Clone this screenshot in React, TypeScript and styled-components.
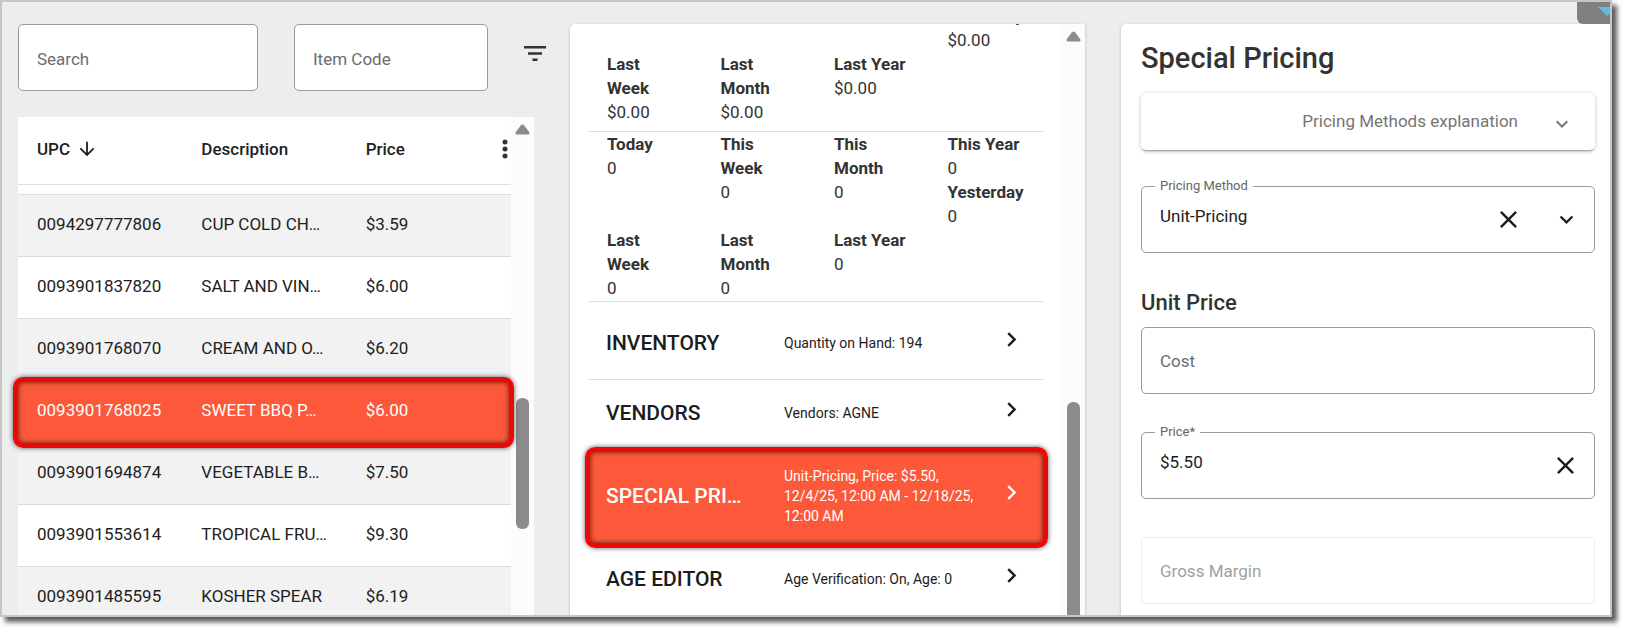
import React from "react";
import styled, { createGlobalStyle, css } from "styled-components";
import {
  MdArrowDownward,
  MdChevronRight,
  MdClose,
  MdExpandMore,
} from "react-icons/md";

const GlobalStyle = createGlobalStyle`
  *, *::before, *::after { box-sizing: border-box; }
  body {
    min-height: 100vh;
    margin: 0;
    background: #fff;
    color: #212121;
    font-family: Roboto, "Liberation Sans", sans-serif;
    font-size: 17px;
    line-height: 24px;
  }
  button, input, select { font: inherit; color: inherit; }
  h1, h2, h3, p, dl, dd { margin: 0; }
`;

const Frame = styled.main`
  position: relative;
  height: calc(100vh - 15px);
  margin-right: 15px;
  border: 2px solid #c8c5c5;
  background: #ebeeed;
  box-shadow: 5px 5px 5px #5a5a5a;
`;

const Columns = styled.div`
  display: grid;
  grid-template-columns: minmax(0, 552fr) minmax(0, 515fr) minmax(0, 525fr);
  grid-template-rows: minmax(0, 1fr);
  height: 100%;
  padding: 22px 0 0 16px;
  overflow: hidden;
`;

const CornerTab = styled.div`
  position: absolute;
  top: 0;
  right: 0;
  width: 33px;
  height: 22px;
  padding: 5px 0 0 21px;
  overflow: hidden;
  border-bottom-left-radius: 6px;
  background: #808080;
  svg { display: block; }
`;

const highlight = css`
  content: "";
  position: absolute;
  z-index: 1;
  border: 5px solid #ea0808;
  border-radius: 10px;
  box-shadow: 0 0 5px rgba(0, 0, 0, 0.65), inset 0 0 5px rgba(0, 0, 0, 0.65);
  pointer-events: none;
`;

const iconButton = css`
  display: flex;
  align-items: center;
  justify-content: center;
  flex: none;
  padding: 0;
  border: 0;
  background: none;
  cursor: pointer;
`;

const FilterButton = styled.button`
  ${iconButton}
  margin-bottom: 8px;
`;

/* Left column: item list */

const ItemsColumn = styled.section`
  display: flex;
  flex-direction: column;
  gap: 26px;
  min-height: 0;
  padding-right: 20px;
`;

const SearchBar = styled.form`
  display: grid;
  grid-template-columns: minmax(0, 240fr) minmax(0, 194fr) 22px;
  gap: 36px;
  align-items: center;
  padding-right: 4px;
`;

const SearchInput = styled.input`
  width: 100%;
  height: 67px;
  padding: 2px 18px 0;
  border: 1px solid #9a9a9a;
  border-radius: 5px;
  background: #fff;
  &::placeholder { color: #6c6c6c; opacity: 1; }
`;

const ItemsPanel = styled.div`
  display: flex;
  flex: 1;
  min-height: 0;
  margin-right: 16px;
  background: #fff;
`;

const TableArea = styled.div`
  flex: 1;
  min-width: 0;
`;

const ItemsTable = styled.table`
  width: 100%;
  table-layout: fixed;
  border-collapse: separate;
  border-spacing: 0;
`;

const HeadCell = styled.th`
  height: 68px;
  padding: 0 3px 4px 19px;
  border-bottom: 1px solid #dedede;
  text-align: left;
  font-weight: 500;
`;

const HeadContent = styled.div`
  display: flex;
  align-items: center;
  gap: 6px;
`;

const MenuButton = styled.button`
  ${iconButton}
  margin-left: auto;
`;

const PreviousRow = styled.tr`
  td {
    height: 10px;
    padding: 0;
    border-bottom: 1px solid #dedede;
  }
`;

const ItemRow = styled.tr<{ $selected?: boolean }>`
  position: relative;
  background: #fff;
  td {
    height: 62px;
    padding: 0 8px 3px 19px;
    border-bottom: 1px solid #dadada;
    white-space: nowrap;
  }
  &:nth-child(even) { background: #f2f2f2; }
  ${(p) =>
    p.$selected &&
    css`
      && { background: #fc5839; }
      color: #fff;
      td { border-color: #fc5839; }
      td:first-child::after {
        ${highlight}
        inset: -4px -3px -5px -5px;
      }
    `}
`;

const ScrollTrack = styled.div`
  display: flex;
  flex-direction: column;
  align-items: center;
  flex: none;
  width: 23px;
  padding-top: 7px;
  background: #fcfcfc;
`;

const ScrollThumb = styled.div<{ $top: number; $height?: number }>`
  width: 13px;
  flex: ${(p) => (p.$height ? `0 0 ${p.$height}px` : "1")};
  margin-top: ${(p) => p.$top}px;
  border-radius: ${(p) => (p.$height ? "6px" : "6px 6px 0 0")};
  background: #8b8b8b;
`;

/* Middle column: item details */

const DetailsPanel = styled.section`
  display: flex;
  min-height: 0;
  overflow: hidden;
  border-radius: 5px 0 0 0;
  background: #fff;
  box-shadow: 0 1px 3px rgba(0, 0, 0, 0.25);
`;

const DetailsContent = styled.div`
  flex: 1;
  min-width: 0;
  margin-top: -20px;
  padding: 0 19px;
`;

const StatGrid = styled.div<{ $padBottom: number }>`
  display: grid;
  grid-template-columns: repeat(4, 1fr);
  padding-bottom: ${(p) => p.$padBottom}px;
  border-bottom: 1px solid #dcdcdc;
  color: #333;
`;

const StatCell = styled.dl<{ $column?: number }>`
  grid-column: ${(p) => p.$column ?? "auto"};
  padding: 0 18px;
  dt { font-weight: 700; }
`;

const SectionRow = styled.a<{ $tall?: boolean; $selected?: boolean }>`
  position: relative;
  display: grid;
  grid-template-columns: 178px 1fr 29px;
  align-items: center;
  padding: ${(p) => (p.$tall ? "28px 17px 23px" : "20px 17px")};
  border-bottom: ${(p) => (p.$tall ? "1px solid #dcdcdc" : "0")};
  color: #1c1c1c;
  text-decoration: none;
  svg { margin: -8px 0 0; }
  ${(p) =>
    p.$selected &&
    css`
      background: linear-gradient(#fc5839, #fc5839) 0 4px no-repeat;
      color: #fff;
      &::after {
        ${highlight}
        inset: 1px -5px -2px -4px;
      }
    `}
`;

const SectionTitle = styled.h3`
  font-size: 21px;
  line-height: 26px;
  font-weight: 500;
`;

const SectionSummary = styled.p`
  padding-right: 12px;
  font-size: 14px;
  line-height: 20px;
`;

/* Right column: special pricing form */

const PricingPanel = styled.section`
  min-height: 0;
  margin-left: 36px;
  padding: 16px 15px 0 20px;
  border-radius: 5px 0 0 0;
  background: #fff;
  box-shadow: 0 1px 3px rgba(0, 0, 0, 0.25);
`;

const PageTitle = styled.h1`
  font-size: 29px;
  line-height: 36px;
  font-weight: 500;
  color: #333;
`;

const Explanation = styled.button`
  display: flex;
  align-items: center;
  justify-content: flex-end;
  gap: 32px;
  width: 100%;
  height: 57px;
  margin: 17px 0 36px;
  padding: 0 21px 2px 0;
  border: 0;
  border-radius: 5px;
  background: #fff;
  color: #757575;
  box-shadow: 0 3px 2px -2px rgba(0, 0, 0, 0.3), 0 1px 4px rgba(0, 0, 0, 0.25);
  cursor: pointer;
  svg { margin-top: 7px; }
`;

const GroupTitle = styled.h2`
  margin: 35px 0 9px;
  font-size: 22px;
  line-height: 30px;
  font-weight: 500;
  color: #333;
`;

const FieldStack = styled.div`
  display: flex;
  flex-direction: column;
  gap: 38px;
`;

const Field = styled.div<{ $disabled?: boolean }>`
  position: relative;
  display: flex;
  align-items: center;
  height: 67px;
  padding-right: 14px;
  border: 1px solid ${(p) => (p.$disabled ? "#ececec" : "#9a9a9a")};
  border-radius: 5px;
  color: #1c1c1c;
`;

const FloatingLabel = styled.label`
  position: absolute;
  top: -10px;
  left: 13px;
  padding: 0 5px;
  background: #fff;
  font-size: 13px;
  line-height: 18px;
  color: #666;
`;

const fieldControl = css`
  flex: 1;
  min-width: 0;
  height: 100%;
  border: 0;
  outline: 0;
  background: transparent;
`;

const TextInput = styled.input<{ $filled?: boolean }>`
  ${fieldControl}
  padding: ${(p) => (p.$filled ? "0 0 7px 18px" : "1px 0 0 18px")};
  &::placeholder { color: #6c6c6c; opacity: 1; }
  &:disabled::placeholder { color: #a0a0a0; }
`;

const SelectInput = styled.select`
  ${fieldControl}
  appearance: none;
  padding: 0 0 7px 18px;
`;

const ClearButton = styled.button<{ $gap?: number }>`
  ${iconButton}
  margin-right: ${(p) => p.$gap ?? 0}px;
`;

const items = [
  ["0094297777806", "CUP COLD CH…", "$3.59"],
  ["0093901837820", "SALT AND VIN…", "$6.00"],
  ["0093901768070", "CREAM AND O…", "$6.20"],
  ["0093901768025", "SWEET BBQ P…", "$6.00"],
  ["0093901694874", "VEGETABLE B…", "$7.50"],
  ["0093901553614", "TROPICAL FRU…", "$9.30"],
  ["0093901485595", "KOSHER SPEAR", "$6.19"],
];

const selectedUpc = "0093901768025";

type Stat = [label: string, value: string];

const Stats = ({ entries, column }: { entries: Stat[]; column?: number }) => (
  <StatCell $column={column}>
    {entries.map(([label, value]) => (
      <React.Fragment key={label}>
        <dt>{label}</dt>
        <dd>{value}</dd>
      </React.Fragment>
    ))}
  </StatCell>
);

const ScrollBar = ({ top, height }: { top: number; height?: number }) => (
  <ScrollTrack aria-hidden="true">
    <svg width="15" height="11" viewBox="0 0 15 11">
      <path
        d="M6 1.2 Q7.500 -0.400 9 1.200 L14.200 8 Q15 10.400 13 10.500 H2 Q0 10.400 0.800 8 Z"
        fill="#8b8b8b"
      />
    </svg>
    <ScrollThumb $top={top} $height={height} />
  </ScrollTrack>
);

const Section = ({
  title,
  summary,
  tall,
  selected,
}: {
  title: string;
  summary: string;
  tall?: boolean;
  selected?: boolean;
}) => (
  <SectionRow href="#" $tall={tall} $selected={selected}>
    <SectionTitle>{title}</SectionTitle>
    <SectionSummary>{summary}</SectionSummary>
    <MdChevronRight size={29} />
  </SectionRow>
);

export default function App() {
  return (
    <>
      <GlobalStyle />
      <Frame>
        <Columns>
          <ItemsColumn>
            <SearchBar onSubmit={(e) => e.preventDefault()}>
              <SearchInput placeholder="Search" aria-label="Search" />
              <SearchInput placeholder="Item Code" aria-label="Item Code" />
              <FilterButton type="button" aria-label="Filter">
                <svg width="22" height="15" viewBox="0 0 22 15" fill="#333">
                  <path d="M0 0h22v2.500H0zM4 6.300h14v2.500H4zM8.500 12.500h5V15h-5z" />
                </svg>
              </FilterButton>
            </SearchBar>
            <ItemsPanel>
              <TableArea>
                <ItemsTable>
                  <thead>
                    <tr>
                      <HeadCell scope="col">
                        <HeadContent>
                          UPC <MdArrowDownward size={22} />
                        </HeadContent>
                      </HeadCell>
                      <HeadCell scope="col">Description</HeadCell>
                      <HeadCell scope="col">
                        <HeadContent>
                          Price
                          <MenuButton type="button" aria-label="Columns">
                            <svg width="6" height="20" viewBox="0 0 6 20" fill="#333">
                              <circle cx="3" cy="3" r="2.500" />
                              <circle cx="3" cy="10" r="2.500" />
                              <circle cx="3" cy="17" r="2.500" />
                            </svg>
                          </MenuButton>
                        </HeadContent>
                      </HeadCell>
                    </tr>
                  </thead>
                  <tbody>
                    <PreviousRow aria-hidden="true">
                      <td colSpan={3} />
                    </PreviousRow>
                    {items.map(([upc, description, price]) => (
                      <ItemRow key={upc} $selected={upc === selectedUpc}>
                        <td>{upc}</td>
                        <td>{description}</td>
                        <td>{price}</td>
                      </ItemRow>
                    ))}
                  </tbody>
                </ItemsTable>
              </TableArea>
              <ScrollBar top={263} height={131} />
            </ItemsPanel>
          </ItemsColumn>

          <DetailsPanel>
            <DetailsContent>
              <StatGrid $padBottom={7}>
                <Stats column={4} entries={[["Yesterday", "$0.00"]]} />
                <Stats entries={[["Last Week", "$0.00"]]} />
                <Stats entries={[["Last Month", "$0.00"]]} />
                <Stats entries={[["Last Year", "$0.00"]]} />
              </StatGrid>
              <StatGrid $padBottom={1}>
                <Stats entries={[["Today", "0"]]} />
                <Stats entries={[["This Week", "0"]]} />
                <Stats entries={[["This Month", "0"]]} />
                <Stats entries={[["This Year", "0"], ["Yesterday", "0"]]} />
                <Stats entries={[["Last Week", "0"]]} />
                <Stats entries={[["Last Month", "0"]]} />
                <Stats entries={[["Last Year", "0"]]} />
              </StatGrid>
              <Section title="INVENTORY" summary="Quantity on Hand: 194" tall />
              <Section title="VENDORS" summary="Vendors: AGNE" />
              <Section
                title="SPECIAL PRI…"
                summary="Unit-Pricing, Price: $5.50, 12/4/25, 12:00 AM - 12/18/25, 12:00 AM"
                selected
              />
              <Section title="AGE EDITOR" summary="Age Verification: On, Age: 0" />
            </DetailsContent>
            <ScrollBar top={360} />
          </DetailsPanel>

          <PricingPanel>
            <PageTitle>Special Pricing</PageTitle>
            <Explanation type="button">
              Pricing Methods explanation
              <MdExpandMore size={24} />
            </Explanation>
            <Field>
              <FloatingLabel htmlFor="method">Pricing Method</FloatingLabel>
              <SelectInput id="method" defaultValue="unit">
                <option value="unit">Unit-Pricing</option>
              </SelectInput>
              <ClearButton type="button" aria-label="Clear pricing method" $gap={30}>
                <MdClose size={29} />
              </ClearButton>
              <MdExpandMore size={27} />
            </Field>
            <GroupTitle>Unit Price</GroupTitle>
            <FieldStack>
              <Field>
                <TextInput placeholder="Cost" aria-label="Cost" />
              </Field>
              <Field>
                <FloatingLabel htmlFor="price">Price*</FloatingLabel>
                <TextInput id="price" defaultValue="$5.50" $filled />
                <ClearButton type="button" aria-label="Clear price">
                  <MdClose size={29} />
                </ClearButton>
              </Field>
              <Field $disabled>
                <TextInput placeholder="Gross Margin" aria-label="Gross Margin" disabled />
              </Field>
            </FieldStack>
          </PricingPanel>
        </Columns>
        <CornerTab>
          <svg width="18" height="10" viewBox="0 0 18 10">
            <path d="M0 0 H18 L9 9 Z" fill="#5bc0de" />
          </svg>
        </CornerTab>
      </Frame>
    </>
  );
}
